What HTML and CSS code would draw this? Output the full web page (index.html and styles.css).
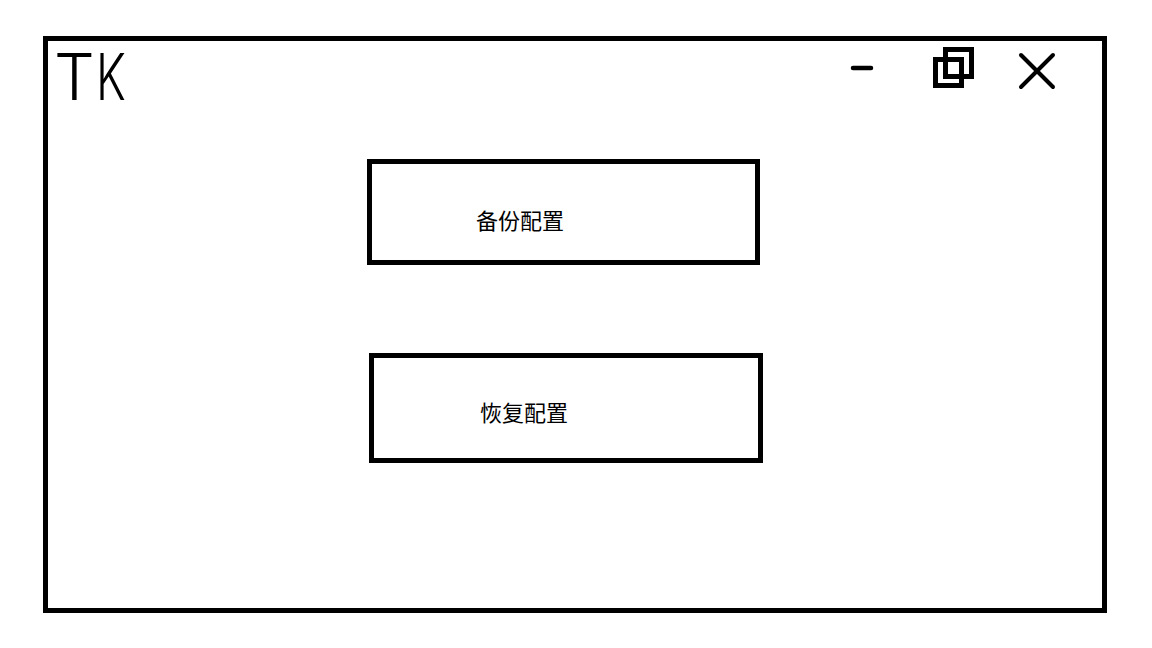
FILE: index.html
```html
<!DOCTYPE html>
<html lang="zh-CN">
<head>
<meta charset="utf-8">
<title>TK</title>
<link rel="stylesheet" href="styles.css">
</head>
<body>
<div class="window">
  <div class="titlebar">
    <div class="logo">T<span class="logo-k">K</span></div>
    <div class="controls">
      <svg class="ctl ctl-min" width="26" height="8" viewBox="0 0 26 8" aria-label="最小化">
        <line x1="4" y1="4" x2="22" y2="4" stroke="#000" stroke-width="4.5" stroke-linecap="round"/>
      </svg>
      <svg class="ctl ctl-max" width="48" height="46" viewBox="0 0 48 46" aria-label="还原">
        <rect x="15.5" y="4.5" width="26" height="27" fill="none" stroke="#000" stroke-width="5"/>
        <rect x="5.5" y="14.5" width="26" height="26" fill="none" stroke="#000" stroke-width="5"/>
      </svg>
      <svg class="ctl ctl-close" width="48" height="46" viewBox="0 0 48 46" aria-label="关闭">
        <line x1="9" y1="9" x2="41" y2="41" stroke="#000" stroke-width="4" stroke-linecap="round"/>
        <line x1="41" y1="9" x2="9" y2="41" stroke="#000" stroke-width="4" stroke-linecap="round"/>
      </svg>
    </div>
  </div>
  <div class="content">
    <button class="btn btn-backup">备份配置</button>
    <button class="btn btn-restore">恢复配置</button>
  </div>
</div>
</body>
</html>
```

FILE: styles.css
```css
html, body {
  margin: 0;
  padding: 0;
  background: #fff;
}

body {
  font-family: "Noto Sans CJK SC", "Noto Sans", sans-serif;
  color: #000;
}

.window {
  box-sizing: border-box;
  width: 1064px;
  height: 577px;
  margin: 36px 0 0 43px;
  border: 5px solid #000;
  display: flex;
  flex-direction: column;
}

.titlebar {
  height: 70px;
  display: flex;
  justify-content: space-between;
  align-items: flex-start;
}

.logo {
  font-family: "Inter", "DejaVu Sans", sans-serif;
  font-weight: 350;
  font-size: 64px;
  line-height: 64px;
  letter-spacing: 1px;
  margin: 4px 0 0 6px;
  white-space: nowrap;
}

.logo-k {
  display: inline-block;
  transform: scaleX(0.72);
  transform-origin: left center;
}

.controls {
  display: flex;
  align-items: flex-start;
  padding-right: 42px;
}

.ctl {
  display: block;
}

.ctl-min {
  margin-top: 23px;
}

.ctl-max {
  margin: 4px 0 0 55px;
}

.ctl-close {
  margin: 5px 0 0 34px;
}

.content {
  display: flex;
  flex-direction: column;
  align-items: flex-start;
}

.btn {
  box-sizing: border-box;
  display: block;
  margin: 0;
  background: #fff;
  border: 5px solid #000;
  border-radius: 0;
  font-family: "Noto Sans CJK SC", sans-serif;
  font-size: 22px;
  line-height: 22px;
  color: #000;
  text-align: left;
  padding: 0 0 0 104px;
  align-self: flex-start;
}

.btn-backup {
  width: 393px;
  height: 106px;
  margin: 48px 0 0 319px;
  padding-top: 44px;
  padding-bottom: 30px;
}

.btn-restore {
  width: 394px;
  height: 110px;
  margin: 88px 0 0 321px;
  padding-top: 42px;
  padding-bottom: 36px;
  padding-left: 106px;
}
```
